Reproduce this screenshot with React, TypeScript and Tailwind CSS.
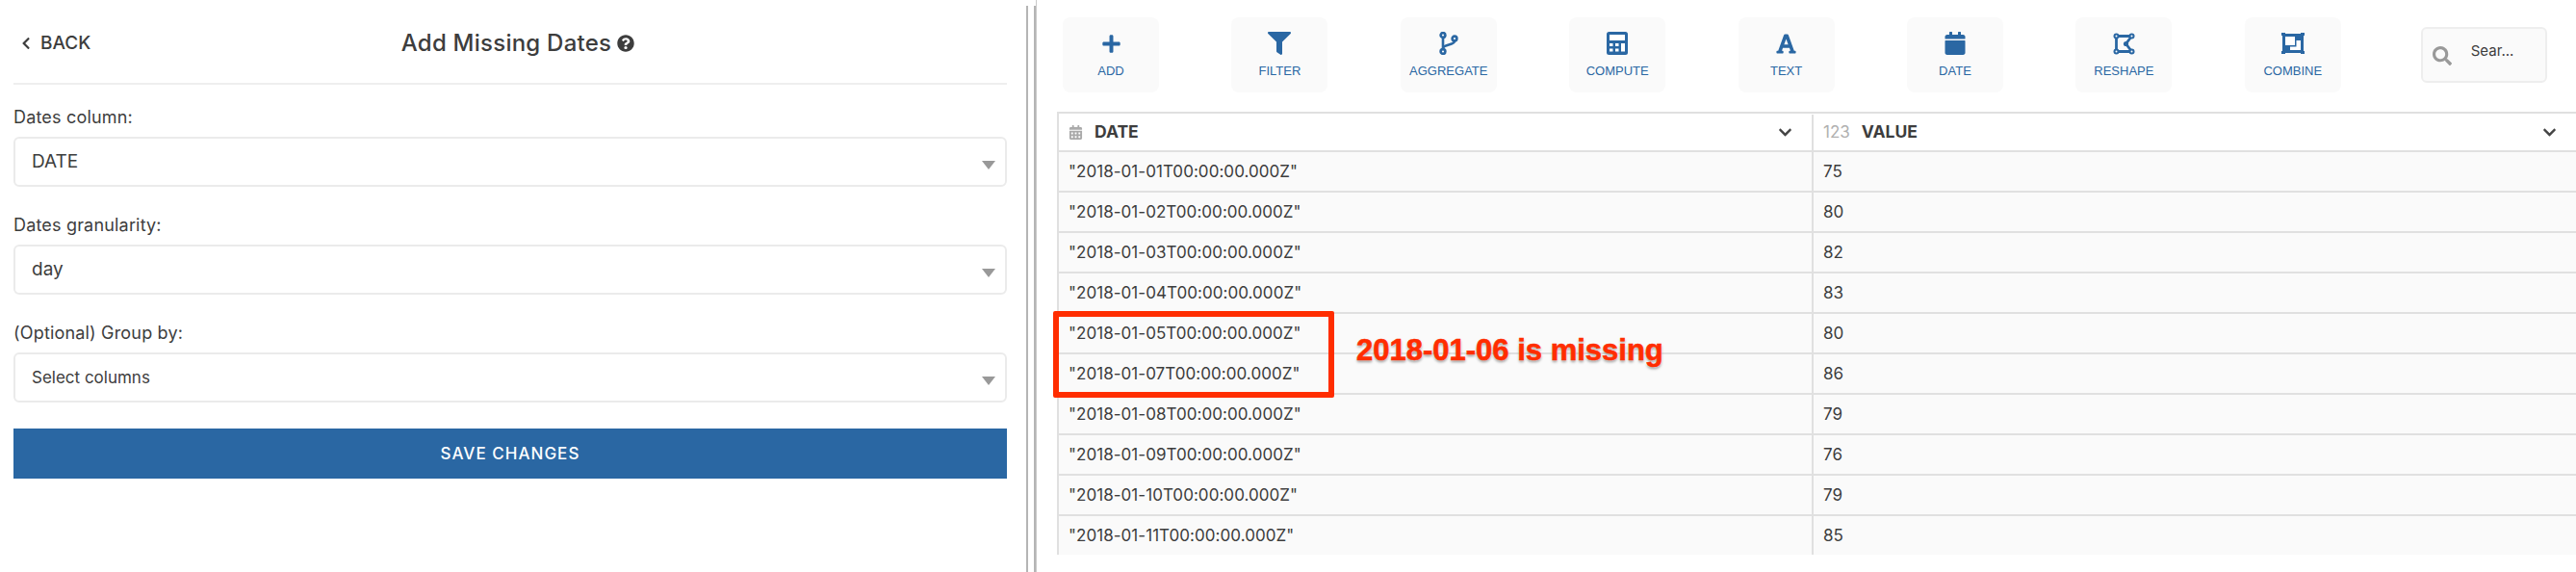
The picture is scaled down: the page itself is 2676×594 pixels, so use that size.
import React from 'react';
import {
  FaPlus,
  FaFilter,
  FaFont,
  FaCalendar,
  FaSearch,
  FaChevronDown,
  FaChevronLeft,
  FaQuestionCircle,
  FaCalendarAlt,
} from 'react-icons/fa';

const ui = "font-['Inter',sans-serif]";

const AggregateIcon = () => (
  <svg width="24" height="24" viewBox="0 0 24 24" fill="none" stroke="#2a67a3" strokeWidth="2.6">
    <circle cx="6" cy="3.5" r="2.4" />
    <circle cx="6" cy="20.5" r="2.4" />
    <circle cx="18" cy="7" r="2.4" />
    <path d="M6 6v12M18 9.5c0 5-12 3-12 8" />
  </svg>
);

const CalculatorIcon = () => (
  <svg width="22" height="24" viewBox="0 0 22 24">
    <rect width="22" height="24" rx="2.5" fill="#2a67a3" />
    <path fill="#fff" d="M3 3h16v6H3zM3 12h3.5v3H3zM9 12h3.5v3H9zM3 17.5h3.5v3H3zM9 17.5h3.5v3H9zM15 12h4v8.5h-4z" />
  </svg>
);

const ReshapeIcon = () => (
  <svg width="23" height="23" viewBox="0 0 23 23" fill="none" stroke="#2a67a3" strokeWidth="2.8">
    <path d="M3.5 3.5h16l-6 8 6 8h-16z" />
    <g fill="#2a67a3" stroke="none">
      <circle cx="3.5" cy="3.5" r="3" />
      <circle cx="19.5" cy="3.5" r="3" />
      <circle cx="13.5" cy="11.5" r="2.6" />
      <circle cx="3.5" cy="19.5" r="3" />
      <circle cx="19.5" cy="19.5" r="3" />
    </g>
    <g fill="#fff" stroke="none">
      <circle cx="3.5" cy="3.5" r="1" />
      <circle cx="19.5" cy="3.5" r="1" />
      <circle cx="3.5" cy="19.5" r="1" />
      <circle cx="19.5" cy="19.5" r="1" />
    </g>
  </svg>
);

const CombineIcon = () => (
  <svg width="24" height="22" viewBox="0 0 24 22">
    <path fill="#2a67a3" d="M1 1h22v20H1z" />
    <path fill="#2a67a3" d="M0 0h4v3H0zM20 0h4v3h-4zM0 19h4v3H0zM20 19h4v3h-4z" />
    <path fill="#fff" d="M4 4h10v9H4zM15.5 8H20v10H9v-3.5h6.5z" />
  </svg>
);

const tools = [
  { label: 'ADD', icon: <FaPlus size={21} color="#2a67a3" /> },
  { label: 'FILTER', icon: <FaFilter size={24} color="#2a67a3" /> },
  { label: 'AGGREGATE', icon: <AggregateIcon /> },
  { label: 'COMPUTE', icon: <CalculatorIcon /> },
  { label: 'TEXT', icon: <FaFont size={23} color="#2a67a3" /> },
  { label: 'DATE', icon: <FaCalendar size={24} color="#2a67a3" /> },
  { label: 'RESHAPE', icon: <ReshapeIcon /> },
  { label: 'COMBINE', icon: <CombineIcon /> },
];

const rows = [
  ['"2018-01-01T00:00:00.000Z"', '75'],
  ['"2018-01-02T00:00:00.000Z"', '80'],
  ['"2018-01-03T00:00:00.000Z"', '82'],
  ['"2018-01-04T00:00:00.000Z"', '83'],
  ['"2018-01-05T00:00:00.000Z"', '80'],
  ['"2018-01-07T00:00:00.000Z"', '86'],
  ['"2018-01-08T00:00:00.000Z"', '79'],
  ['"2018-01-09T00:00:00.000Z"', '76'],
  ['"2018-01-10T00:00:00.000Z"', '79'],
  ['"2018-01-11T00:00:00.000Z"', '85'],
];

const Field = ({ label, value, small }: { label: string; value: string; small?: boolean }) => (
  <div className="flex flex-col">
    <label className="h-[24px] text-[18px] leading-[24px] tracking-[0.01em] text-[#3d3d3d]">{label}</label>
    <div className="mt-[8px] flex h-[52px] items-center justify-between rounded-[6px] border-2 border-[#ebebeb] pl-[17px] pr-[10px]">
      <span className={small ? 'pt-[2px] text-[17px] text-[#3d3d3d]' : 'text-[19px] text-[#3d3d3d]'}>{value}</span>
      <span className="mt-[6px] h-0 w-0 border-x-[7px] border-t-[9px] border-x-transparent border-t-[#999]" />
    </div>
  </div>
);

const App: React.FC = () => {
  return (
    <div className={`flex h-[594px] w-[2676px] overflow-hidden bg-white ${ui}`}>
      {/* Painel esquerdo */}
      <div className="flex w-[1066px] shrink-0 flex-col pl-[14px] pr-[20px]">
        <div className="relative flex h-[88px] items-center justify-center border-b-2 border-[#eee] pt-[4px]">
          <span className="absolute left-[6px] flex items-center gap-[8px] text-[19px] font-medium text-[#3d3d3d]">
            <FaChevronLeft size={14} />
            BACK
          </span>
          <span className="ml-[16px] flex items-center gap-[6px] text-[24px] font-medium tracking-[0.01em] text-[#3d3d3d]">
            Add Missing Dates
            <FaQuestionCircle size={18} />
          </span>
        </div>
        <div className="mt-[22px] flex flex-col gap-[28px]">
          <Field label="Dates column:" value="DATE" />
          <Field label="Dates granularity:" value="day" />
          <Field label="(Optional) Group by:" value="Select columns" small />
        </div>
        <button className="mt-[27px] h-[52px] bg-[#2a67a3] pt-[2px] text-[17px] font-medium tracking-[0.06em] text-white">
          SAVE CHANGES
        </button>
      </div>

      {/* Divisor */}
      <div className="mt-[6px] h-[588px] w-[10px] shrink-0 border-x-2 border-[#b5b5b5]" />
      <div className="w-[1px] shrink-0 bg-[#c9c9c9]" />

      {/* Painel direito */}
      <div className="relative flex min-w-0 flex-1 flex-col pl-[21px]">
        <div className="flex h-[116px] items-start">
          <div className="mt-[18px] flex gap-[75.4px] pl-[6px]">
            {tools.map((t) => (
              <div
                key={t.label}
                className="flex h-[78px] w-[100px] flex-col items-center rounded-[8px] bg-[#fafafa]"
              >
                <div className="mt-[14px] flex h-[26px] items-center justify-center">{t.icon}</div>
                <span className="mt-[7px] font-['Liberation_Sans',sans-serif] text-[13px] leading-[18px] text-[#2a67a3]">
                  {t.label}
                </span>
              </div>
            ))}
          </div>
          <div className="mt-[28px] ml-[83px] flex h-[58px] w-[131px] items-start rounded-[6px] border-2 border-[#eee] bg-[#fafafa] pl-[10px]">
            <FaSearch size={20} color="#999" className="mt-[18px]" />
            <span className="ml-[20px] mt-[12px] text-[15px] text-[#3d3d3d]">Sear...</span>
          </div>
        </div>

        <div className="flex h-[42px] border-y-2 border-l-2 border-[#e0e0e0] pt-[1px]">
          <div className="flex w-[784px] items-center border-r-2 border-[#e0e0e0] pl-[10px] pr-[20px]">
            <FaCalendarAlt size={15} color="#aaa" />
            <span className="ml-[12px] text-[17.5px] font-bold text-[#3d3d3d]">DATE</span>
            <FaChevronDown size={15} color="#444" className="ml-auto" />
          </div>
          <div className="flex flex-1 items-center pl-[10px] pr-[20px]">
            <span className="text-[17px] text-[#b0b0b0]">123</span>
            <span className="ml-[12px] text-[17.5px] font-bold text-[#3d3d3d]">VALUE</span>
            <FaChevronDown size={15} color="#444" className="ml-auto" />
          </div>
        </div>

        <div className="flex flex-col border-l-2 border-[#e0e0e0]">
          {rows.map(([date, value]) => (
            <div key={date} className="flex h-[42px] border-b-2 border-[#e0e0e0] bg-[#fafafa] text-[17px] tracking-[0.003em] text-[#3d3d3d] last:h-[40px] last:border-b-0">
              <div className="flex w-[784px] items-center border-r-2 border-[#e0e0e0] pl-[10px] pt-[1px]">{date}</div>
              <div className="flex flex-1 items-center pl-[10px] pt-[1px]">{value}</div>
            </div>
          ))}
        </div>

        {/* Anotação */}
        <div className="absolute left-[17px] top-[323px] h-[90px] w-[292px] rounded-[2px] border-[6px] border-[#ff2d00]" />
        <div className="absolute left-[332px] top-[345px] font-['Liberation_Sans',sans-serif] text-[31px] font-bold leading-[38px] text-[#ff2d00] [-webkit-text-stroke:0.6px_#ff2d00] [text-shadow:0_0_2px_#fff,0_2px_3px_rgba(0,0,0,0.4)]">
          2018-01-06 is missing
        </div>
      </div>
    </div>
  );
};

export default App;
